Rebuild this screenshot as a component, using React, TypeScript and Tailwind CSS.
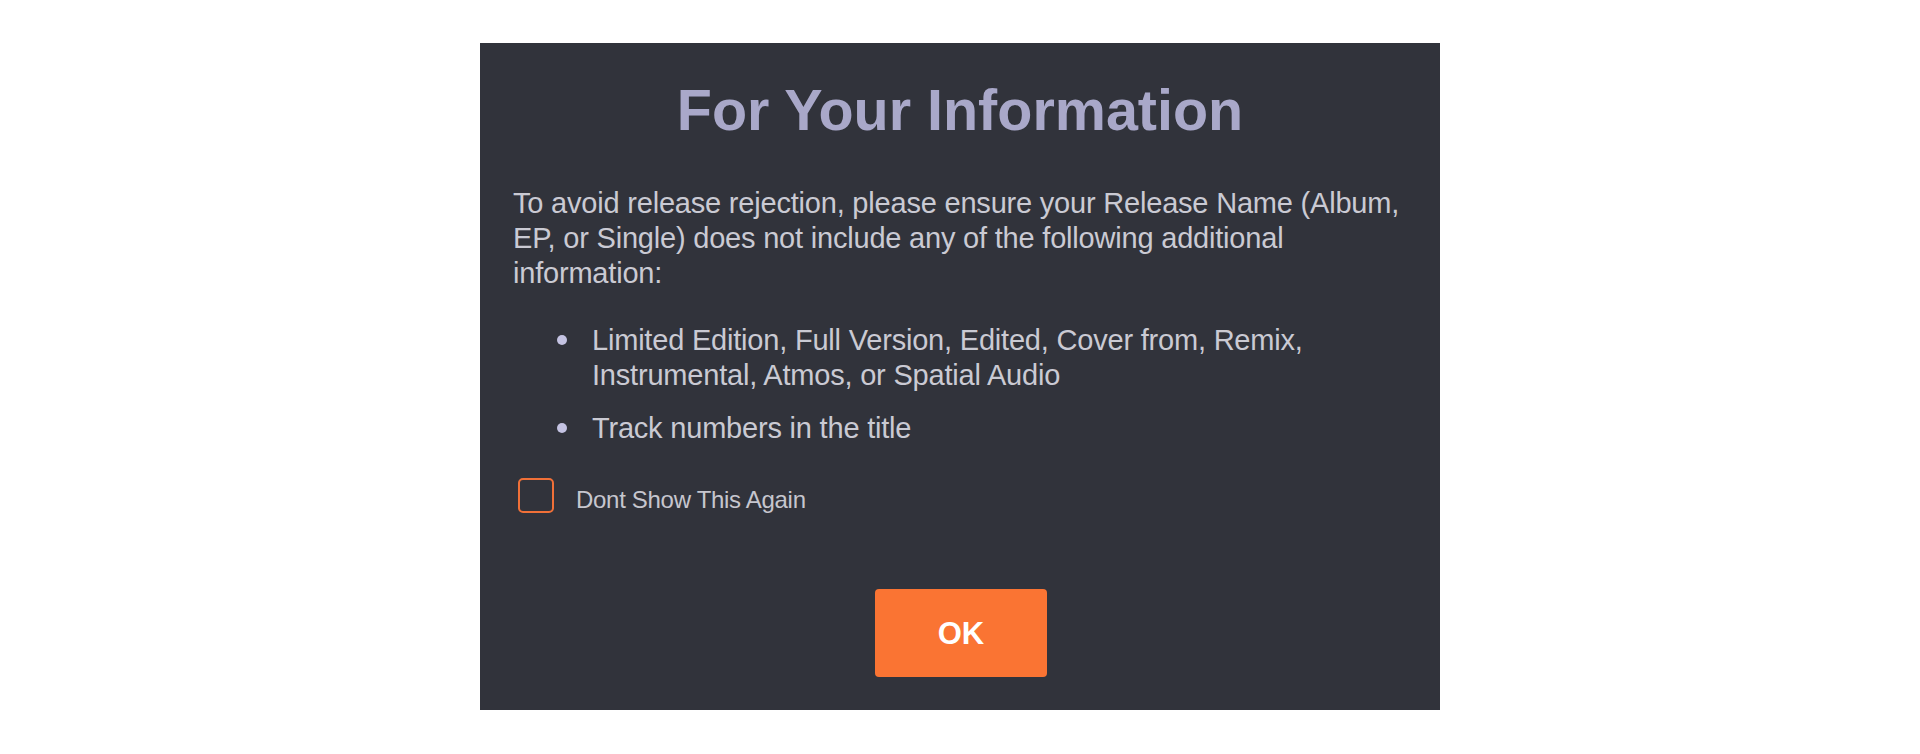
import React from "react";

export default function App() {
  const font = { fontFamily: '"Liberation Sans", Arial, sans-serif' };
  return (
    <div className="min-h-[754px] w-full bg-white flex justify-center pt-[43px]" style={font}>
      <div className="w-[960px] h-[667px] bg-[#31333b] px-[33px] pt-[38px] flex flex-col">
        <h1 className="text-center text-[57.5px] leading-[58px] font-bold text-[#a9a8c9]">
          For Your Information
        </h1>
        <p className="mt-[47px] text-[29px] leading-[35px] tracking-[-0.2px] text-[#cacad3]">
          To avoid release rejection, please ensure your Release Name (Album, EP, or Single) does not include any of the following additional information:
        </p>
        <ul className="mt-[32px] flex flex-col gap-[18px] text-[29px] leading-[35px] tracking-[-0.2px] text-[#cacad3]">
          <li className="flex">
            <span className="w-[79px] shrink-0 flex justify-start pl-[44px] pt-[12px]">
              <span className="block w-[10px] h-[10px] rounded-full bg-[#c4c3e2]" />
            </span>
            <span>
              Limited Edition, Full Version, Edited, Cover from, Remix, Instrumental, Atmos, or Spatial Audio
            </span>
          </li>
          <li className="flex">
            <span className="w-[79px] shrink-0 flex justify-start pl-[44px] pt-[12px]">
              <span className="block w-[10px] h-[10px] rounded-full bg-[#c4c3e2]" />
            </span>
            <span>Track numbers in the title</span>
          </li>
        </ul>
        <div className="mt-[32px] ml-[5px] flex items-start h-[35px]">
          <span className="block w-[36px] h-[35px] rounded-[5px] border-2 border-[#f07038] shrink-0" />
          <span className="ml-[22px] mt-[8px] text-[24px] leading-[27px] tracking-[-0.3px] text-[#c6c6ce]">
            Dont Show This Again
          </span>
        </div>
        <div className="mt-[76px] flex justify-center">
          <button className="w-[172px] h-[88px] rounded-[4px] bg-[#fa7433] text-white font-bold text-[31px] leading-none ml-[2px]">
            OK
          </button>
        </div>
      </div>
    </div>
  );
}
